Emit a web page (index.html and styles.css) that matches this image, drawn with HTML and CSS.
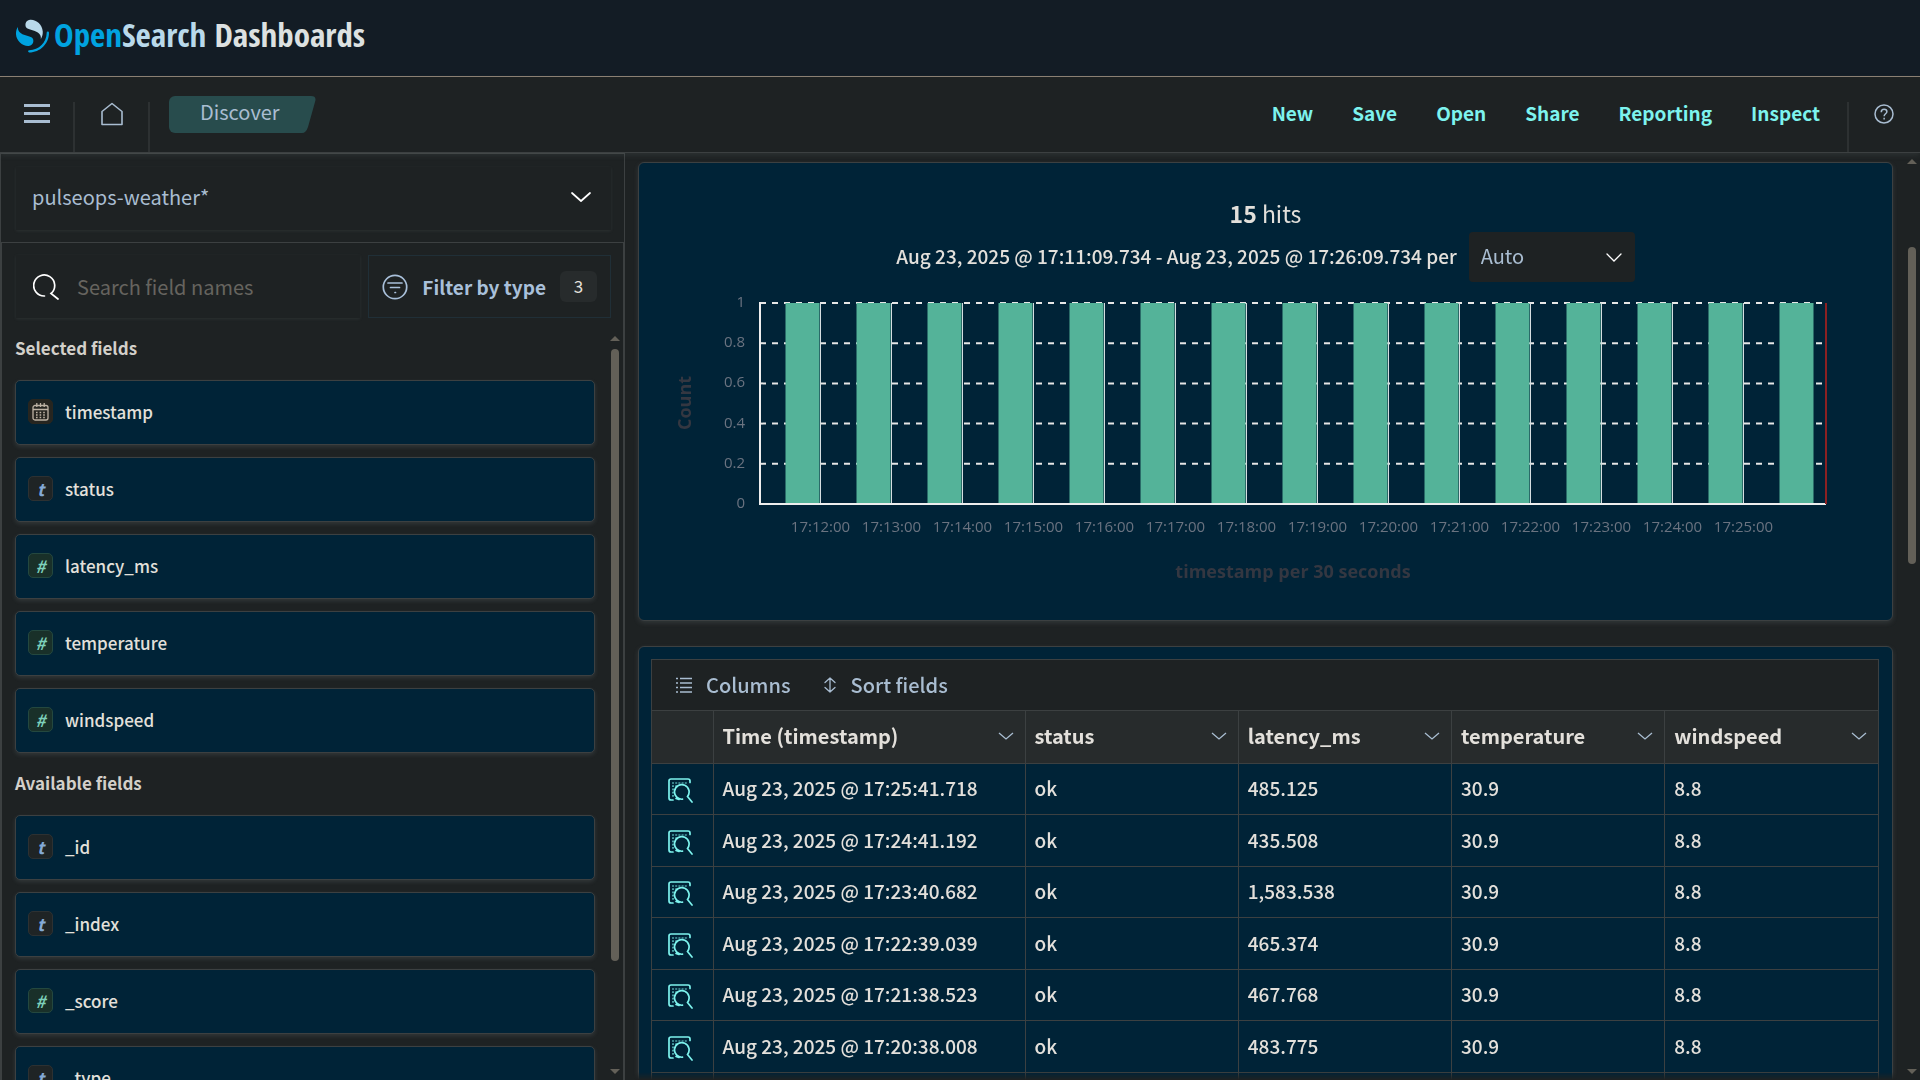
FILE: index.html
```html
<!DOCTYPE html>
<html lang="en">
<head>
<meta charset="utf-8">
<title>Discover - OpenSearch Dashboards</title>
<link rel="stylesheet" href="styles.css">
</head>
<body>
<header class="brandbar">
  <a class="brand" href="#" aria-label="OpenSearch Dashboards">
    <svg class="brand-mark" viewBox="0 0 64 64" aria-hidden="true">
      <path fill="#00a3e0" d="M61.7 23.5a2.2 2.2 0 0 0-2.2 2.2c0 18.700-15.100 33.800-33.800 33.800a2.200 2.200 0 1 0 0 4.500C46.900 64 64 46.900 64 25.700a2.200 2.200 0 0 0-2.300-2.200z"/>
      <path fill="#b9d9eb" d="M48.100 38c2.200-3.500 4.200-8.200 3.800-14.700C51.100 9.800 38.800-.4 27.200.7c-4.500.400-9.200 4.100-8.800 10.800.2 2.900 1.600 4.600 3.900 6 2.200 1.200 5 2 8.200 2.900 3.900 1.100 8.300 2.300 11.800 4.900 4.100 3 6.900 6.600 5.800 12.700z"/>
      <path fill="#00a3e0" d="M3.900 14C1.700 17.500-.4 22.200 0 28.700.8 42.200 13.200 52.400 24.800 51.300c4.500-.4 9.200-4.100 8.800-10.800-.2-2.900-1.600-4.600-3.900-6-2.200-1.200-5-2-8.200-2.900-3.900-1.100-8.300-2.300-11.800-4.900C5.500 23.700 2.800 20.100 3.900 14z"/>
    </svg>
    <span class="wordmark"><span class="open">Open</span><span class="search">Search</span> Dashboards</span>
  </a>
</header>
<nav class="navbar" aria-label="Main">
  <button class="icon-button menu" aria-label="Toggle navigation"><svg width="26" height="20" viewBox="0 0 26 20"><path d="M0 0h26v3H0zM0 8h26v3H0zM0 16h26v3H0z" fill="currentColor"/></svg></button>
  <a class="icon-button home" href="#" aria-label="Home"><svg width="22" height="24" viewBox="0 0 22 24" fill="none" stroke="currentColor" stroke-width="1.600" stroke-linejoin="round"><path d="M1 9.500 11 1.500l10 8V22.500H1z"/></svg></a>
  <span class="crumb" aria-current="page">Discover<svg class="crumb-end" width="14" height="37" viewBox="0 0 14 37" aria-hidden="true"><path d="M0 0h9q6 0 4 6L6 31q-2 6-6 6z" fill="#284c4d"/></svg></span>
  <div class="actions">
    <button>New</button><button>Save</button><button>Open</button><button>Share</button><button>Reporting</button><button>Inspect</button>
  </div>
  <button class="icon-button help" aria-label="Help"><svg width="20" height="20" viewBox="0 0 16 16"><circle cx="8" cy="8" r="7.200" fill="none" stroke="currentColor" stroke-width="1.200"/><path d="M5.800 6.500c0-1.500 1-2.400 2.300-2.400s2.200.8 2.200 2c0 1.700-2.200 1.700-2.200 3.600M8.100 11v1.300" fill="none" stroke="currentColor" stroke-width="1.200"/></svg></button>
</nav>
<div class="workspace">
  <aside class="sidebar">
    <div class="source">
      <button class="source-select">pulseops-weather*<svg width="20" height="10" viewBox="0 0 20 10" fill="none" stroke="#fff" stroke-width="1.700" stroke-linecap="round" stroke-linejoin="round"><path d="m1 1 9 8 9-8"/></svg></button>
    </div>
    <div class="fields">
      <div class="filters">
        <label class="search-box"><svg width="26" height="26" viewBox="0 0 26 26" fill="none" stroke="#fff" stroke-width="1.700" stroke-linecap="round"><path d="M11.500 22A10.500 10.500 0 1 1 18 19.500l7 5.500"/></svg><input type="search" placeholder="Search field names" aria-label="Search field names"></label>
        <button class="type-filter"><svg width="26" height="26" viewBox="0 0 26 26" fill="none" stroke="currentColor" stroke-width="1.700" stroke-linecap="round"><circle cx="13" cy="13" r="11.700"/><path d="M6 9h14M8.500 13.500h9M13 18.500h.5"/></svg>Filter by type<span class="count">3</span></button>
      </div>
      <div class="field-area">
        <div class="field-scroll">
          <h2>Selected fields</h2>
          <ul>
            <li><span class="token date"><svg width="17" height="18" viewBox="0 0 17 18" fill="none" stroke="currentColor" stroke-width="1.300"><rect x="1" y="2.500" width="15" height="14.500" rx="2"/><path d="M1 6.500h15M4.800 0v4M8.500 0v4M12.200 0v4"/><path stroke-width="1.600" stroke-dasharray="1.600 2" d="M4 9.500h9M4 12h9M4 14.500h9"/></svg></span>timestamp</li>
            <li><span class="token text">t</span>status</li>
            <li><span class="token number">#</span>latency_ms</li>
            <li><span class="token number">#</span>temperature</li>
            <li><span class="token number">#</span>windspeed</li>
          </ul>
          <h2>Available fields</h2>
          <ul>
            <li><span class="token text">t</span>_id</li>
            <li><span class="token text">t</span>_index</li>
            <li><span class="token number">#</span>_score</li>
            <li><span class="token text">t</span>_type</li>
          </ul>
        </div>
        <div class="scrollbar" aria-hidden="true"><i class="up"></i><div class="track"><i class="thumb"></i></div><i class="down"></i></div>
      </div>
    </div>
  </aside>
  <main class="content">
    <section class="panel histogram">
      <p class="hits"><strong>15</strong> hits</p>
      <div class="range"><label for="interval">Aug 23, 2025 @ 17:11:09.734 - Aug 23, 2025 @ 17:26:09.734 per</label>
        <div class="select-wrap"><select id="interval"><option>Auto</option></select><svg width="16" height="9" viewBox="0 0 16 9" fill="none" stroke="#fff" stroke-width="1.300" stroke-linecap="round"><path d="m1 1 7 7 7-7"/></svg></div>
      </div>
      <svg class="chart" viewBox="0 0 1253 310" role="img" aria-label="Count of documents by timestamp per 30 seconds"></svg>
    </section>
    <section class="panel results">
      <div class="grid">
        <div class="grid-tools">
          <button><svg width="16" height="16" viewBox="0 0 16 16" stroke="currentColor" stroke-width="1.300"><path d="M0 1.500h2M4 1.500h12M0 6h2M4 6h12M0 10.500h2M4 10.500h12M0 15h2M4 15h12"/></svg>Columns</button>
          <button><svg width="14" height="16" viewBox="0 0 14 16" fill="none" stroke="currentColor" stroke-width="1.300" stroke-linecap="round" stroke-linejoin="round"><path d="M7 1v14M2 5.500 7 1l5 4.500M2 10.500 7 15l5-4.500"/></svg>Sort fields</button>
        </div>
        <table>
          <colgroup><col class="col-inspect"><col class="col-time"><col><col><col><col></colgroup>
          <thead><tr></tr></thead>
          <tbody></tbody>
        </table>
      </div>
    </section>
  </main>
  <div class="scrollbar page-scroll" aria-hidden="true"><i class="up"></i><div class="track"><i class="thumb"></i></div><i class="down"></i></div>
</div>
<script src="app.js"></script>
</body>
</html>
```
FILE: styles.css
```css
* { box-sizing: border-box; }
body {
  margin: 0;
  height: 100vh;
  display: flex;
  flex-direction: column;
  overflow: hidden;
  background: #1e2223;
  color: #e3e0db;
  font: 20px/24px "Noto Sans CJK JP", "Noto Sans", sans-serif;
}
button, input, select { font: inherit; color: inherit; background: none; border: 0; padding: 0; margin: 0; }
button { cursor: pointer; }
svg { display: block; flex: none; }
h2, p, ul { margin: 0; padding: 0; }
a { color: inherit; text-decoration: none; }

.brandbar { flex: none; height: 77px; padding: 17px 16px; background: #131c25; border-bottom: 1px solid #8c8073; }
.brand { display: inline-flex; align-items: flex-end; gap: 5px; }
.brand-mark { width: 33px; height: 34px; }
.wordmark { font: bold 33px/36px "Open Sans Condensed", "Roboto Condensed", "Liberation Sans Narrow", "Noto Sans CJK JP", sans-serif; color: #dde1e1; white-space: nowrap; }
.open { color: #00a3e0; }
.search { color: #b9d9eb; }

.navbar { flex: none; display: flex; height: 76px; border-bottom: 1px solid #3c4041; box-shadow: 0 2px 6px rgba(130, 140, 145, .16); color: #a9bdd1; position: relative; z-index: 1; }
.icon-button { height: 50px; margin-top: 25px; padding: 0 0 26px; display: flex; align-items: center; justify-content: center; width: 75px; border-right: 2px solid #2d3132; }
.menu { padding-right: 13px; padding-left: 14px; }
.help { width: 73px; padding-right: 2px; border-right: 0; border-left: 2px solid #2d3132; }
.crumb { align-self: flex-start; display: flex; height: 37px; margin: 19px 0 0 19px; padding-left: 31px; line-height: 32px; background: #284c4d; border-radius: 6px 0 0 6px; }
.crumb-end { margin: 0 -14px 0 22px; }
.actions { display: flex; gap: 39px; margin: 20px 27px 0 auto; height: 32px; color: #7df3ee; font-size: 19px; font-weight: bold; }

.workspace { flex: 1; min-height: 0; display: flex; }
.sidebar { width: 625px; flex: none; display: flex; flex-direction: column; border: 2px solid #3c4041; border-width: 1px 1px 0; min-height: 0; }
.source { padding: 13px 13px 12px 15px; height: 88px; }
.source-select { width: 100%; height: 63px; padding: 0 20px 3px 16px; display: flex; align-items: center; justify-content: space-between; color: #a9bdd1; box-shadow: 0 1px 3px rgba(130, 140, 145, .14); }
.fields { flex: 1; min-height: 0; display: flex; flex-direction: column; border: 1px solid #3c4041; border-bottom: 0; }
.filters { display: flex; gap: 8px; padding: 12px; padding-left: 14px; }
.search-box { flex: 1; min-width: 0; height: 63px; padding: 0 17px; display: flex; align-items: center; gap: 18px; box-shadow: 0 1px 3px rgba(130, 140, 145, .14); }
.search-box input { width: 100%; outline: 0; }
.search-box input::placeholder { color: #66645f; opacity: 1; }
.type-filter { height: 63px; padding: 0 13px; display: flex; align-items: center; gap: 14px; border: 1px solid #202f37; font-size: 19px; font-weight: bold; color: #a9c0da; }
.count { width: 37px; height: 31px; border-radius: 6px; background: #272b2c; color: #e3e0db; font-size: 17px; font-weight: normal; line-height: 30px; text-align: center; }
.field-area { flex: 1; min-height: 0; display: flex; }
.field-scroll { flex: 1; overflow: hidden; padding: 0 12px 0 13px; }
.field-scroll h2 { font-size: 17px; line-height: 24px; color: #d3d0ca; padding: 6px 0 20px; }
.field-scroll ul { list-style: none; display: flex; flex-direction: column; gap: 12px; }
.field-scroll ul + h2 { padding-top: 18px; }
.field-scroll li { height: 65px; flex: none; display: flex; align-items: center; gap: 12px; padding: 0 12px 2px; font-size: 17px; font-weight: 500; background: #002337; border: 1px solid #3c4041; border-radius: 5px; box-shadow: 0 2px 4px rgba(130, 140, 145, .2); }
.token { width: 25px; height: 25px; display: grid; place-items: center; border: 1px solid; border-radius: 5px; font: italic bold 17px/20px "Noto Sans CJK JP", sans-serif; }
.date { color: #bdb2a4; background: #262520; border-color: #28261f; }
.text { color: #84a9d5; background: #1f2425; border-color: #2d3132; }
.number { color: #7dd0bb; background: #193029; border-color: #24483f; }

.scrollbar { width: 16px; flex: none; display: flex; flex-direction: column; align-items: center; gap: 8px; padding: 6px 0; }
.scrollbar .up, .scrollbar .down { border: 5px solid transparent; border-top-width: 0; border-bottom-color: #636058; }
.scrollbar .down { border-width: 5px 5px 0; border-color: #636058 transparent; }
.track { flex: 1; width: 8px; }
.thumb { display: block; width: 8px; height: 86%; border-radius: 4px; background: #636058; }
.page-scroll .track { padding-top: 75px; }
.page-scroll .thumb { height: 39%; }

.content { flex: 1; min-width: 0; padding: 9px 11px 0 13px; display: flex; flex-direction: column; gap: 25px; overflow: hidden; mask-image: linear-gradient(#000 calc(100% - 8px), transparent); }
.panel { flex: none; background: #002337; border: 1px solid #3c4041; border-radius: 6px; box-shadow: 0 2px 5px rgba(130, 140, 145, .2); }
.histogram { padding-top: 36px; }
.hits { font-size: 23px; line-height: 28px; text-align: center; }
.range { display: flex; justify-content: center; align-items: center; gap: 12px; margin-top: 5px; }
.range label { padding-bottom: 3px; font-size: 19px; font-weight: 500; }
.select-wrap { position: relative; width: 166px; height: 50px; }
.select-wrap select { appearance: none; width: 100%; height: 100%; padding: 0 0 3px 12px; background: #1e2223; border-radius: 4px; color: #a9bdd1; }
.select-wrap svg { position: absolute; right: 13px; top: 21px; pointer-events: none; }
.chart { width: 100%; height: auto; margin-top: 10px; margin-bottom: 18px; }
.tick { font: 15px "Open Sans", "Noto Sans", sans-serif; fill: #6a7380; }
.axis-title { font: bold 18px "Open Sans", "Noto Sans", sans-serif; fill: #343741; text-anchor: middle; }
.end { text-anchor: end; }
.middle { text-anchor: middle; }
.gridline { stroke: #e6e6e6; stroke-width: 2; stroke-dasharray: 6 6; }
.vline { stroke: #d5dde0; stroke-width: 1; }
.axis { stroke: #eee; stroke-width: 2; fill: none; }
.bar { fill: #54b399; }
.now { stroke: #8b2022; stroke-width: 2; }

.results { padding: 12px 13px 0 12px; }
.grid { border: 1px solid #3c4041; border-bottom: 0; }
.grid-tools { height: 50px; padding: 0 25px 1px 24px; display: flex; align-items: center; gap: 32px; background: #1e2223; color: #a9bdd1; font-weight: 500; }
.grid-tools button { display: flex; align-items: center; gap: 14px; }
table { width: 100%; table-layout: fixed; border-collapse: collapse; text-align: left; }
.col-inspect { width: 61px; }
.col-time { width: 312px; }
th, td { height: 51px; padding: 0 0 2px 9px; border: 1px solid #3c4041; white-space: nowrap; }
td { font-size: 19px; font-weight: 500; }
tbody tr:nth-child(even) td { height: 52px; }
th:first-child, td:first-child { border-left: 0; }
th:last-child, td:last-child { border-right: 0; }
th { height: 53px; padding-right: 11px; background: #272b2c; }
th div { display: flex; align-items: center; justify-content: space-between; }
th svg { color: #a9bdd1; }
.inspect { display: block; margin-left: 7px; padding-top: 5px; color: #7df3ee; }
```
FILE: app.js
```
const chart = document.querySelector('.chart');
let out = '';
for (let i = 0; i <= 5; i++) {
  const y = 11 + i * 40.2;
  const label = i === 0 ? '1' : i === 5 ? '0' : (1 - i / 5).toFixed(1);
  out += `<text class="tick end" x="106" y="${y + 4}">${label}</text><line class="gridline" x1="121" x2="1187" y1="${y}" y2="${y}"/>`;
}
for (let i = 0; i < 15; i++) {
  const x = 146.500 + i * 71;
  out += `<rect class="bar" x="${x}" y="11" width="34" height="201"/>`;
  if (i < 14) out += `<line class="vline" x1="${x + 35}" x2="${x + 35}" y1="11" y2="212"/><text class="tick middle" x="${x + 35}" y="240">17:${12 + i}:00</text>`;
}
out += '<path class="axis" d="M121 10v202h1066"/><line class="now" x1="1187" x2="1187" y1="11" y2="212"/>';
out += '<text class="axis-title" transform="translate(52 111) rotate(-90)">Count</text><text class="axis-title" x="654" y="286">timestamp per 30 seconds</text>';
chart.innerHTML = out;

const chevron = '<svg width="16" height="8" viewBox="0 0 16 8" fill="none" stroke="currentColor" stroke-width="1.300"><path d="m1 1 7 6 7-6"/></svg>';
document.querySelector('thead tr').innerHTML = '<th></th>' +
  ['Time (timestamp)', 'status', 'latency_ms', 'temperature', 'windspeed'].map(h => `<th scope="col"><div>${h}${chevron}</div></th>`).join('');
const inspect = '<button class="inspect" aria-label="Inspect document details"><svg width="25" height="25" viewBox="0 0 25 25" fill="none" stroke="currentColor" stroke-width="1.700" stroke-linecap="round"><path d="M22 4.500V3q0-2-2-2H3Q1 1 1 3v17q0 2 2 2h2"/><path d="M14.500 21.200a7.300 7.300 0 1 1 5-2.700l4.500 5.500M8 20.500l3 1"/><path d="M4 5h15M4 8.200h5M4 11.400h2M4 14.600h2M4 17.800h2" stroke-linecap="butt" stroke-dasharray="2 1.200" opacity=".6"/></svg></button>';
const rows = [
  ['17:25:41.718', '485.125'], ['17:24:41.192', '435.508'], ['17:23:40.682', '1,583.538'],
  ['17:22:39.039', '465.374'], ['17:21:38.523', '467.768'], ['17:20:38.008', '483.775'], ['17:19:37.491', '471.206']
];
document.querySelector('tbody').innerHTML = rows.map(([time, latency]) =>
  `<tr><td>${inspect}</td><td>Aug 23, 2025 @ ${time}</td><td>ok</td><td>${latency}</td><td>30.9</td><td>8.8</td></tr>`).join('');
```
